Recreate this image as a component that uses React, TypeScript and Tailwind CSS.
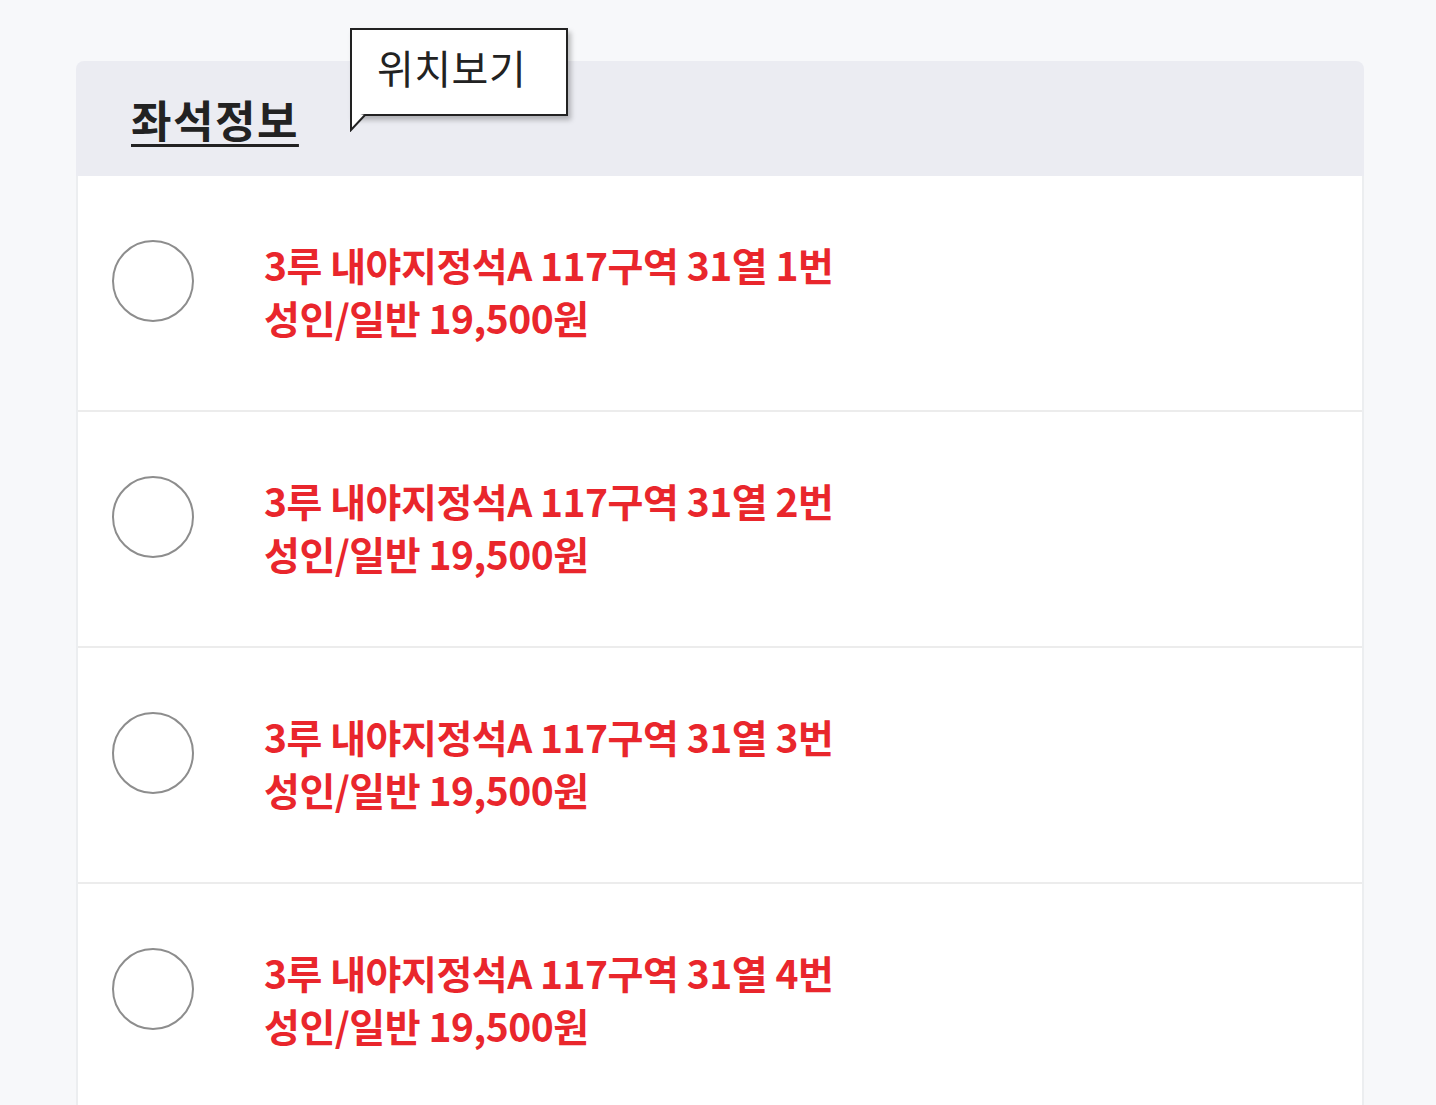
const SEATS = [1, 2, 3, 4];

const FONT = { fontFamily: '"Noto Sans CJK KR", "Noto Sans", sans-serif' };

function SeatRow({ no }: { no: number }) {
  return (
    <div className="flex h-[236px] items-start border-b-2 border-[#ececec] pl-[34px] pt-[64px]">
      <button
        type="button"
        aria-label={`좌석 ${no} 선택`}
        className="h-[82px] w-[82px] shrink-0 rounded-full border-2 border-[#8d8d8d] bg-white"
      />
      <div className="ml-[70px] -mt-[2px] text-[39px] font-bold leading-[53px] tracking-[-0.5px] text-[#e9262c]">
        <p>3루 내야지정석A 117구역 31열 {no}번</p>
        <p>성인/일반 19,500원</p>
      </div>
    </div>
  );
}

export default function App() {
  return (
    <div className="min-h-[1105px] overflow-hidden bg-[#f7f8fa] px-[76px] pt-[61px]" style={FONT}>
      <div className="relative w-[1288px]">
        <div className="flex h-[115px] items-center rounded-t-lg bg-[#ebecf2] pl-[55px]">
          <h2 className="text-[44px] font-bold leading-none tracking-[1.5px] text-[#222] underline decoration-[3px] underline-offset-[6px]">
            좌석정보
          </h2>
        </div>

        {/* 말풍선 */}
        <div className="absolute left-[274px] top-[-33px]">
          <div className="flex h-[88px] w-[218px] items-start border-2 border-[#222] bg-white pl-[25px] pt-[12px] shadow-[3px_4px_5px_rgba(0,0,0,0.25)]">
            <span className="text-[40px] leading-[50px] tracking-[0.5px] text-[#222]">위치보기</span>
          </div>
          <svg className="absolute left-0 top-[84px]" width="18" height="20" viewBox="0 0 18 20">
            <path d="M1 0 L1 18 L15 3" fill="white" stroke="#222" strokeWidth="2" strokeLinejoin="miter" />
          </svg>
        </div>

        <div className="border-x-2 border-[#eceef0] bg-white">
          {SEATS.map((n) => (
            <SeatRow key={n} no={n} />
          ))}
        </div>
      </div>
    </div>
  );
}
